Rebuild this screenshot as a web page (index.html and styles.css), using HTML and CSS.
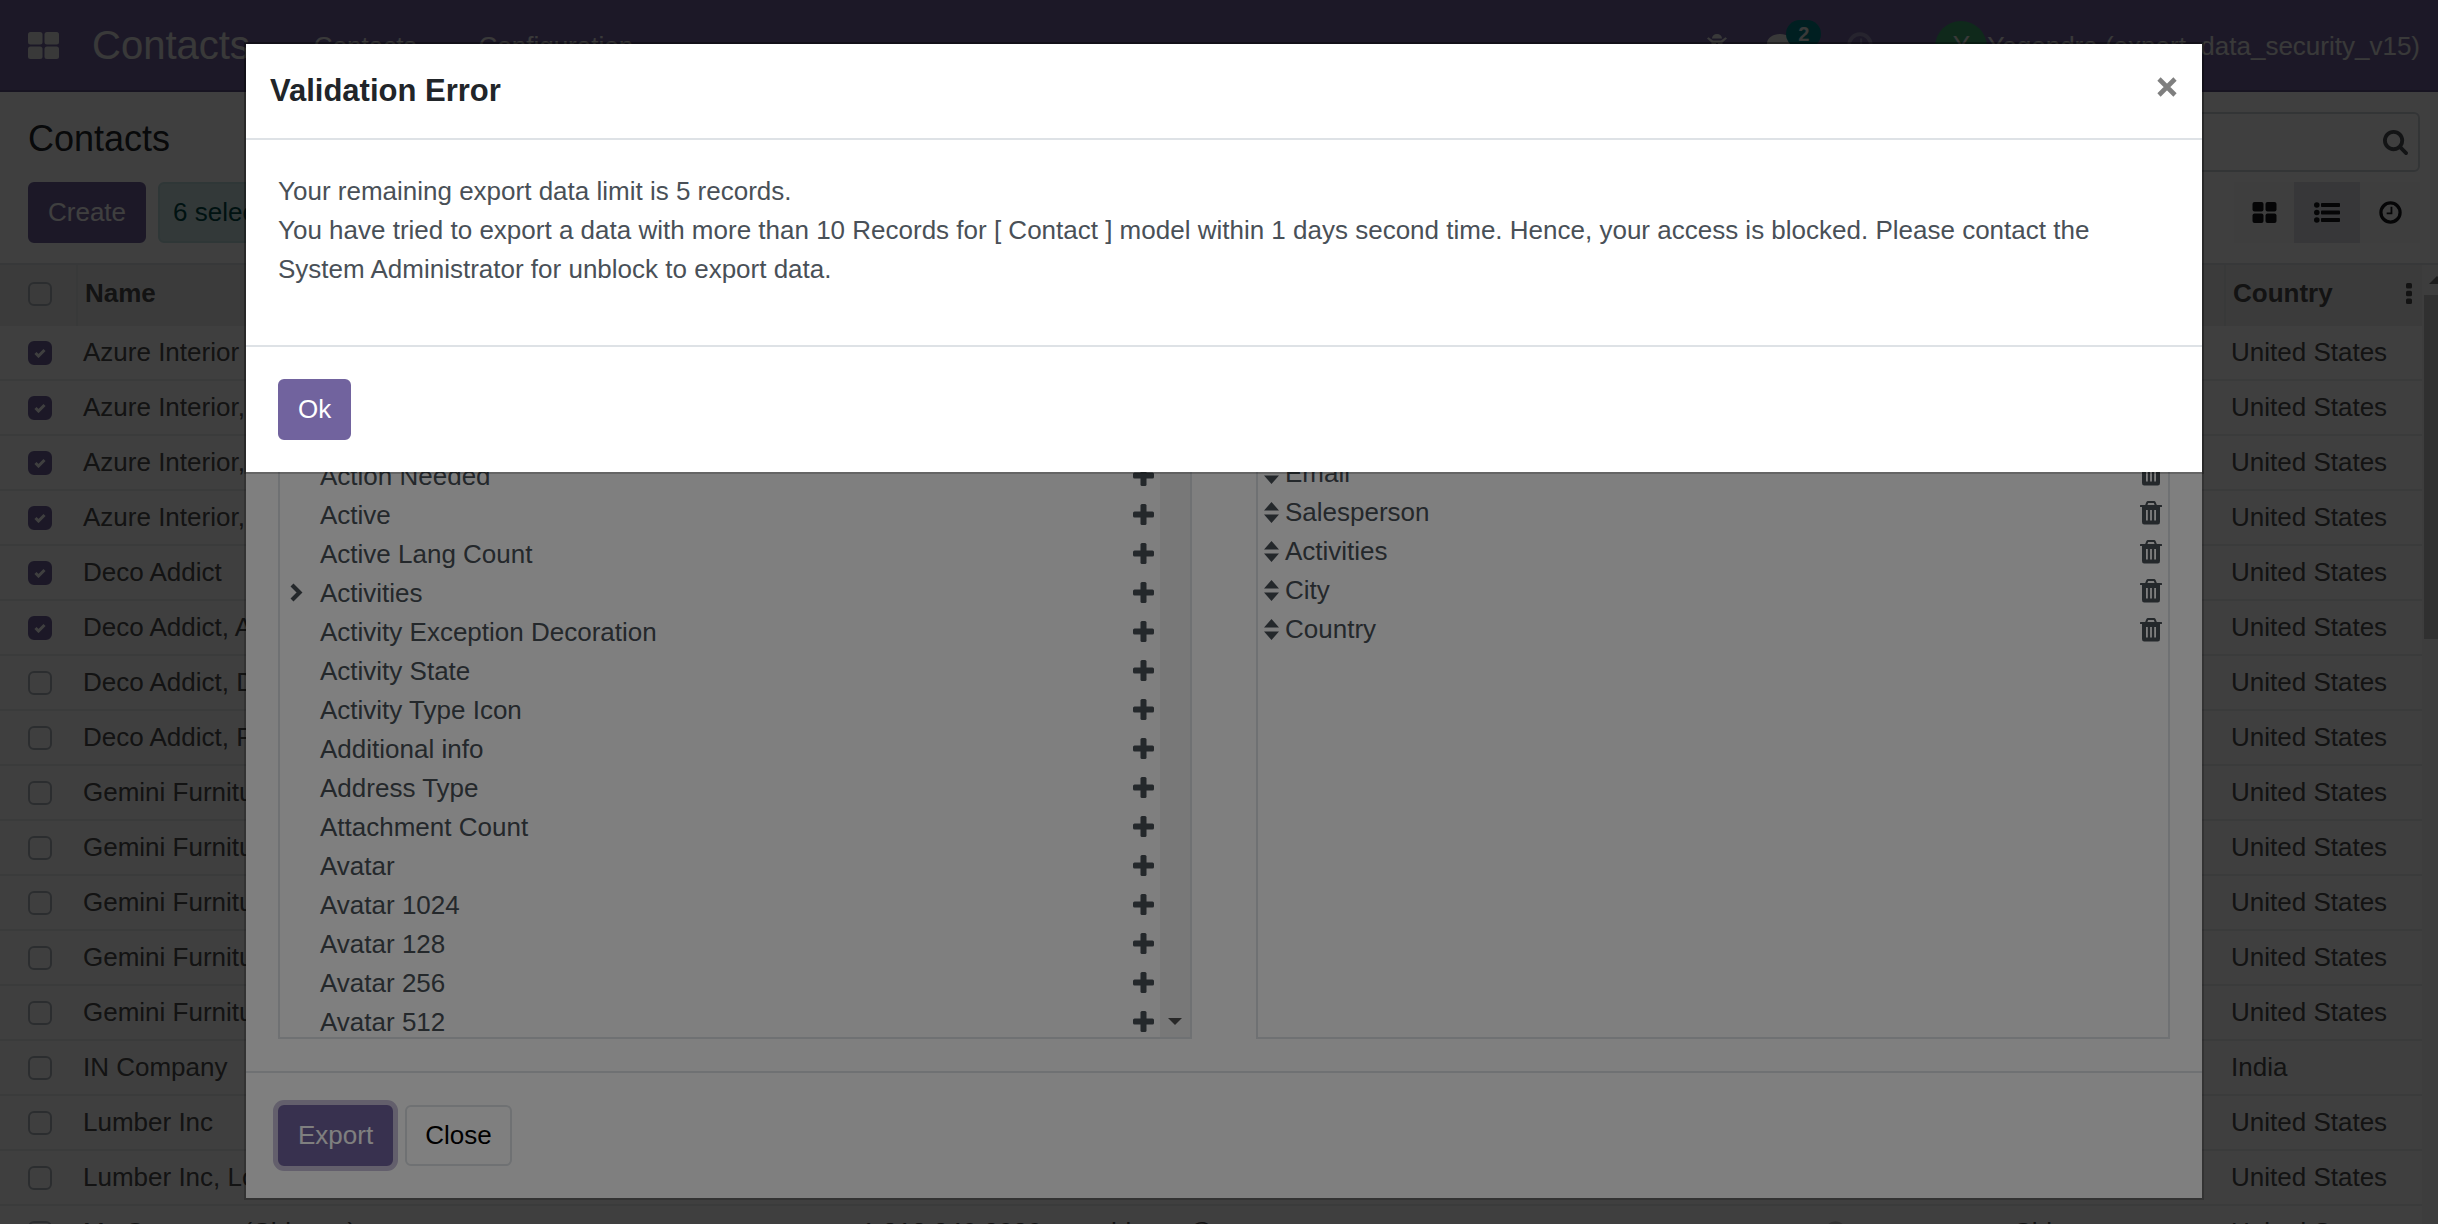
FILE: index.html
```html
<!DOCTYPE html>
<html lang="en">
<head>
<meta charset="utf-8">
<title>Contacts</title>
<link rel="stylesheet" href="styles.css">
</head>
<body>
<svg class="sprite" aria-hidden="true">
  <symbol id="i-grid" viewBox="0 0 24 21"><rect width="11" height="9.500" rx="2"/><rect x="13" width="11" height="9.500" rx="2"/><rect y="11.500" width="11" height="9.500" rx="2"/><rect x="13" y="11.500" width="11" height="9.500" rx="2"/></symbol>
  <symbol id="i-apps" viewBox="0 0 31 27"><rect width="14.500" height="12.500" rx="2.500"/><rect x="16.500" width="14.500" height="12.500" rx="2.500"/><rect y="14.500" width="14.500" height="12.500" rx="2.500"/><rect x="16.500" y="14.500" width="14.500" height="12.500" rx="2.500"/></symbol>
  <symbol id="i-list" viewBox="0 0 26 21"><circle cx="2.800" cy="3" r="2.800"/><circle cx="2.800" cy="10.500" r="2.800"/><circle cx="2.800" cy="18" r="2.800"/><rect x="7" y="1" width="19" height="4" rx=".8"/><rect x="7" y="8.500" width="19" height="4" rx=".8"/><rect x="7" y="16" width="19" height="4" rx=".8"/></symbol>
  <symbol id="i-clock" viewBox="0 0 24 24"><circle cx="12" cy="12" r="10" fill="none" stroke="currentColor" stroke-width="3.400"/><path d="M13 6v7H8" fill="none" stroke="currentColor" stroke-width="1.900"/></symbol>
  <symbol id="i-search" viewBox="0 0 1664 1664"><path d="M1152 704q0-185-131.500-316.500t-316.500-131.500-316.500 131.500-131.500 316.500 131.500 316.500 316.500 131.500 316.500-131.500 131.500-316.500zm512 832q0 52-38 90t-90 38q-54 0-90-38l-343-342q-179 124-399 124-143 0-273.500-55.500t-225-150-150-225-55.500-273.500 55.500-273.500 150-225 225-150 273.500-55.500 273.500 55.500 225 150 150 225 55.500 273.500q0 220-124 399l343 343q37 37 37 90z"/></symbol>
  <symbol id="i-trash" viewBox="0 0 22 24"><path fill-rule="evenodd" d="M8 0h6q1.200 0 1.700 1.200L16.800 4H21.500q.5 0 .5.500v1q0 .5-.5.500H20v15q0 2.500-2.200 2.500H4.200Q2 23.500 2 21V6H.5Q0 6 0 5.500v-1Q0 4 .5 4h4.700l1.100-2.800Q6.800 0 8 0zM8.200 2 7.400 4h7.200l-.8-2zM6 9v10.500h1.800V9zm4.100 0v10.500h1.800V9zm4.100 0v10.500H16V9z"/></symbol>
  <symbol id="i-plus" viewBox="0 0 21 21"><rect y="7.500" width="21" height="6" rx="1.500"/><rect x="7.500" width="6" height="21" rx="1.500"/></symbol>
  <symbol id="i-sort" viewBox="0 0 15 21"><path d="M0 8.500 7.500 0 15 8.500zM0 12.500h15L7.500 21z"/></symbol>
  <symbol id="i-chevron" viewBox="0 0 13 19"><path d="M2 2l7.500 7.500L2 17" fill="none" stroke="currentColor" stroke-width="4.200"/></symbol>
  <symbol id="i-bug" viewBox="0 0 20 22"><path d="M5 4.500a5 4.500 0 0 1 10 0zM0 4.500l1.500-1.300L6 6.500h8l4.500-3.300L20 4.500 15.500 8.500v3H20v2h-4.500l3.500 5-1.600 1.200-3.200-3.500Q13 19.500 11 20V9H9v11q-2-.5-3.200-3.300l-3.200 3.500L1 18.500l3.500-5H0v-2h4.500v-3z"/></symbol>
  <symbol id="i-chat" viewBox="0 0 26 24"><path d="M13 1c7 0 13 4 13 9.500S20 20 13 20l-3-.2Q7 23 2 23.500q3-3 3-5.200Q0 15.500 0 10.500C0 5 6 1 13 1z"/></symbol>
  <symbol id="i-dots" viewBox="0 0 6 21"><rect width="6" height="5.500" rx="1.500"/><rect y="7.700" width="6" height="5.500" rx="1.500"/><rect y="15.400" width="6" height="5.500" rx="1.500"/></symbol>
  <symbol id="i-x" viewBox="0 0 20 20"><path d="M2 2l16 16M18 2 2 18" stroke="currentColor" stroke-width="4.600"/></symbol>
</svg>

<div class="page">
  <nav class="navbar">
    <button class="plain apps" aria-label="Applications"><svg width="31" height="27"><use href="#i-apps"/></svg></button>
    <a class="brand" href="#">Contacts</a>
    <a class="menu" href="#">Contacts</a>
    <a class="menu" href="#">Configuration</a>
    <div class="systray">
      <button class="plain" aria-label="Debug"><svg width="20" height="22"><use href="#i-bug"/></svg></button>
      <button class="plain chat" aria-label="Messages"><svg width="26" height="24"><use href="#i-chat"/></svg><span class="badge">2</span></button>
      <button class="plain dim" aria-label="Activities"><svg width="26" height="26"><use href="#i-clock"/></svg></button>
      <a class="user" href="#"><span class="avatar">Y</span>Yogendra (export_data_security_v15)</a>
    </div>
  </nav>

  <header class="control">
    <h1>Contacts</h1>
    <div class="search"><input type="search" aria-label="Search"><svg width="25" height="25"><use href="#i-search"/></svg></div>
    <div class="actions">
      <button class="btn primary">Create</button>
      <span class="selection">6 selected</span>
    </div>
    <div class="views">
      <button aria-label="Kanban"><svg width="25" height="21"><use href="#i-grid"/></svg></button>
      <button class="active" aria-label="List"><svg width="26" height="21"><use href="#i-list"/></svg></button>
      <button aria-label="Activity"><svg width="23" height="23"><use href="#i-clock"/></svg></button>
    </div>
  </header>

  <div class="content">
    <table class="records">
      <colgroup><col class="c-check"><col><col class="c-phone"><col class="c-email"><col class="c-activity"><col class="c-city"><col class="c-country"></colgroup>
      <thead><tr><th><input type="checkbox" aria-label="Select all"></th><th>Name</th><th></th><th></th><th></th><th></th><th><div class="last"><span>Country</span><svg width="6" height="21"><use href="#i-dots"/></svg></div></th></tr></thead>
      <tbody>
        <tr><td><input type="checkbox" aria-label="Select" checked></td><td colspan="5">Azure Interior</td><td>United States</td></tr>
        <tr><td><input type="checkbox" aria-label="Select" checked></td><td colspan="5">Azure Interior, Brandon Freeman</td><td>United States</td></tr>
        <tr><td><input type="checkbox" aria-label="Select" checked></td><td colspan="5">Azure Interior, Colleen Diaz</td><td>United States</td></tr>
        <tr><td><input type="checkbox" aria-label="Select" checked></td><td colspan="5">Azure Interior, Nicole Ford</td><td>United States</td></tr>
        <tr><td><input type="checkbox" aria-label="Select" checked></td><td colspan="5">Deco Addict</td><td>United States</td></tr>
        <tr><td><input type="checkbox" aria-label="Select" checked></td><td colspan="5">Deco Addict, Addison Olson</td><td>United States</td></tr>
        <tr><td><input type="checkbox" aria-label="Select"></td><td colspan="5">Deco Addict, Douglas Fletcher</td><td>United States</td></tr>
        <tr><td><input type="checkbox" aria-label="Select"></td><td colspan="5">Deco Addict, Floyd Steward</td><td>United States</td></tr>
        <tr><td><input type="checkbox" aria-label="Select"></td><td colspan="5">Gemini Furniture</td><td>United States</td></tr>
        <tr><td><input type="checkbox" aria-label="Select"></td><td colspan="5">Gemini Furniture, Edwin Hansen</td><td>United States</td></tr>
        <tr><td><input type="checkbox" aria-label="Select"></td><td colspan="5">Gemini Furniture, Jesse Brown</td><td>United States</td></tr>
        <tr><td><input type="checkbox" aria-label="Select"></td><td colspan="5">Gemini Furniture, Oscar Morgan</td><td>United States</td></tr>
        <tr><td><input type="checkbox" aria-label="Select"></td><td colspan="5">Gemini Furniture, Soham Palmer</td><td>United States</td></tr>
        <tr><td><input type="checkbox" aria-label="Select"></td><td colspan="5">IN Company</td><td>India</td></tr>
        <tr><td><input type="checkbox" aria-label="Select"></td><td colspan="5">Lumber Inc</td><td>United States</td></tr>
        <tr><td><input type="checkbox" aria-label="Select"></td><td colspan="5">Lumber Inc, Lorraine Douglas</td><td>United States</td></tr>
        <tr><td><input type="checkbox" aria-label="Select"></td><td>My Company (Chicago)</td><td>+1 312 349 3030</td><td>chicago@yourcompany.com</td><td class="faint"><svg width="23" height="23"><use href="#i-clock"/></svg></td><td>Chicago</td><td>United States</td></tr>
      </tbody>
    </table>
    <div class="page-scroll" aria-hidden="true"><i class="up"></i><i class="thumb"></i></div>
  </div>
</div>

<div class="backdrop">
  <section class="modal export" role="dialog" aria-label="Export data">
    <div class="modal-body panels">
      <div class="panel">
        <ul class="fields">
          <li><span class="name">Action Needed</span><button class="plain" aria-label="Add"><svg width="21" height="21"><use href="#i-plus"/></svg></button></li>
          <li><span class="name">Active</span><button class="plain" aria-label="Add"><svg width="21" height="21"><use href="#i-plus"/></svg></button></li>
          <li><span class="name">Active Lang Count</span><button class="plain" aria-label="Add"><svg width="21" height="21"><use href="#i-plus"/></svg></button></li>
          <li><svg class="expand" width="13" height="19"><use href="#i-chevron"/></svg><span class="name">Activities</span><button class="plain" aria-label="Add"><svg width="21" height="21"><use href="#i-plus"/></svg></button></li>
          <li><span class="name">Activity Exception Decoration</span><button class="plain" aria-label="Add"><svg width="21" height="21"><use href="#i-plus"/></svg></button></li>
          <li><span class="name">Activity State</span><button class="plain" aria-label="Add"><svg width="21" height="21"><use href="#i-plus"/></svg></button></li>
          <li><span class="name">Activity Type Icon</span><button class="plain" aria-label="Add"><svg width="21" height="21"><use href="#i-plus"/></svg></button></li>
          <li><span class="name">Additional info</span><button class="plain" aria-label="Add"><svg width="21" height="21"><use href="#i-plus"/></svg></button></li>
          <li><span class="name">Address Type</span><button class="plain" aria-label="Add"><svg width="21" height="21"><use href="#i-plus"/></svg></button></li>
          <li><span class="name">Attachment Count</span><button class="plain" aria-label="Add"><svg width="21" height="21"><use href="#i-plus"/></svg></button></li>
          <li><span class="name">Avatar</span><button class="plain" aria-label="Add"><svg width="21" height="21"><use href="#i-plus"/></svg></button></li>
          <li><span class="name">Avatar 1024</span><button class="plain" aria-label="Add"><svg width="21" height="21"><use href="#i-plus"/></svg></button></li>
          <li><span class="name">Avatar 128</span><button class="plain" aria-label="Add"><svg width="21" height="21"><use href="#i-plus"/></svg></button></li>
          <li><span class="name">Avatar 256</span><button class="plain" aria-label="Add"><svg width="21" height="21"><use href="#i-plus"/></svg></button></li>
          <li><span class="name">Avatar 512</span><button class="plain" aria-label="Add"><svg width="21" height="21"><use href="#i-plus"/></svg></button></li>
        </ul>
        <div class="panel-scroll" aria-hidden="true"><i class="down"></i></div>
      </div>
      <div class="panel">
        <ul class="chosen">
          <li><svg width="15" height="21"><use href="#i-sort"/></svg><span class="name">Email</span><button class="plain" aria-label="Remove"><svg width="22" height="24"><use href="#i-trash"/></svg></button></li>
          <li><svg width="15" height="21"><use href="#i-sort"/></svg><span class="name">Salesperson</span><button class="plain" aria-label="Remove"><svg width="22" height="24"><use href="#i-trash"/></svg></button></li>
          <li><svg width="15" height="21"><use href="#i-sort"/></svg><span class="name">Activities</span><button class="plain" aria-label="Remove"><svg width="22" height="24"><use href="#i-trash"/></svg></button></li>
          <li><svg width="15" height="21"><use href="#i-sort"/></svg><span class="name">City</span><button class="plain" aria-label="Remove"><svg width="22" height="24"><use href="#i-trash"/></svg></button></li>
          <li><svg width="15" height="21"><use href="#i-sort"/></svg><span class="name">Country</span><button class="plain" aria-label="Remove"><svg width="22" height="24"><use href="#i-trash"/></svg></button></li>
        </ul>
      </div>
    </div>
    <footer class="modal-footer">
      <button class="btn primary focused">Export</button>
      <button class="btn secondary">Close</button>
    </footer>
  </section>
</div>

<div class="backdrop">
  <section class="modal" role="dialog" aria-labelledby="error-title">
    <header class="modal-header">
      <h2 id="error-title">Validation Error</h2>
      <button class="plain close" aria-label="Close"><svg width="20" height="20"><use href="#i-x"/></svg></button>
    </header>
    <div class="modal-body message">
      <p>Your remaining export data limit is 5 records.<br>You have tried to export a data with more than 10 Records for [ Contact ] model within 1 days second time. Hence, your access is blocked. Please contact the System Administrator for unblock to export data.</p>
    </div>
    <footer class="modal-footer"><button class="btn primary">Ok</button></footer>
  </section>
</div>
</body>
</html>
```
FILE: styles.css
```css
* { box-sizing: border-box; }

body {
  margin: 0;
  height: 100vh;
  overflow: hidden;
  background: #fff;
  color: #4c4c4c;
  font: 26px/39px "Liberation Sans", Arial, sans-serif;
}

h1, h2, p, ul { margin: 0; padding: 0; font-weight: normal; }
ul { list-style: none; }
a { color: inherit; text-decoration: none; }
svg { display: block; flex: none; fill: currentColor; }
button, input { font: inherit; color: inherit; margin: 0; }
.sprite { position: absolute; width: 0; height: 0; }

.plain { padding: 0; border: 0; background: none; display: flex; }

.btn {
  padding: 9px 18px;
  border: 2px solid #dee2e6;
  border-radius: 6px;
  background: #fff;
  color: #212529;
}
.btn.primary { border-color: #71639e; background: #71639e; color: #fff; }
.btn.secondary { color: #000; }
.btn.focused { box-shadow: 0 0 0 5px #c6bfd8; }

/* Top bar */
.page { height: 100%; display: flex; flex-direction: column; overflow: hidden; }
.navbar {
  flex: none;
  height: 92px;
  padding: 0 18px 0 28px;
  display: flex;
  align-items: center;
  background: #71639e;
  border-bottom: 2px solid #5f5387;
  color: #e6e6e6;
}
.brand { margin: 0 38px 0 33px; font-size: 40px; }
.menu { padding: 3px 26px 0; margin-right: 10px; }
.systray { margin-left: auto; display: flex; align-items: center; }
.systray .plain { margin-right: 40px; }
.systray .chat { position: relative; margin-right: 54px; }
.systray .dim { margin-right: 62px; color: #9a90bb; }
.badge {
  position: absolute;
  left: 19px;
  top: -13px;
  width: 35px;
  border-radius: 14px;
  background: #017e84;
  font: bold 20px/28px "Liberation Sans", Arial, sans-serif;
}
.user { display: flex; align-items: center; padding-top: 3px; }
.avatar {
  width: 52px;
  height: 52px;
  border-radius: 50%;
  background: #3ca56e;
  text-align: center;
  line-height: 48px;
}

/* Control panel */
.control {
  flex: none;
  display: grid;
  grid-template-columns: 1fr 1fr;
  row-gap: 10px;
  padding: 20px 18px 20px 28px;
  border-bottom: 2px solid #dee2e6;
}
.control h1 { font-size: 36px; line-height: 54px; color: #212529; }
.search {
  display: flex;
  align-items: center;
  height: 60px;
  padding-right: 10px;
  border: 2px solid #ced4da;
  border-radius: 6px;
  color: #4c5157;
}
.search input { flex: 1; border: 0; background: none; outline: 0; }
.actions { display: flex; gap: 12px; }
.selection {
  padding: 9px 13px;
  border: 2px solid #bcdcdd;
  border-radius: 6px;
  background: #cce5e6;
  color: #014a46;
}
.views { display: flex; justify-content: flex-end; }
.views button {
  width: 60px;
  display: grid;
  place-items: center;
  padding: 0;
  border: 0;
  background: #fafafb;
  color: #14171a;
}
.views .active { width: 66px; background: #dcdfe6; }

/* Record list */
.content { flex: 1; min-height: 0; display: flex; align-items: flex-start; overflow: hidden; }
.records { flex: 1; min-width: 0; table-layout: fixed; border-collapse: separate; border-spacing: 0; }
.c-check { width: 76px; }
.c-phone { width: 252px; }
.c-email { width: 726px; }
.c-activity { width: 189px; }
.c-city { width: 218px; }
.c-country { width: 198px; }
.records th, .records td { height: 55px; padding: 0 7px; text-align: left; }
.records th { height: 61px; padding-bottom: 4px; background: #efefef; }
.records th:nth-child(2), .records th:last-child { border-left: 2px solid #e2e4e6; }
.records td { border-bottom: 2px solid #e9ecef; }
.records th:first-child, .records td:first-child { padding-left: 28px; }
.last { display: flex; justify-content: space-between; align-items: center; padding-right: 3px; }
.faint { color: #c8c8c8; }
.records input {
  appearance: none;
  display: block;
  width: 24px;
  height: 24px;
  border: 2px solid #adb5bd;
  border-radius: 6px;
}
.records input:checked {
  border-color: #71639e;
  background: #71639e url("data:image/svg+xml,%3Csvg xmlns='http://www.w3.org/2000/svg' viewBox='0 0 12 10'%3E%3Cpath d='M1.500 5l3 3 6-6' fill='none' stroke='%23fff' stroke-width='3'/%3E%3C/svg%3E") center / 12px 10px no-repeat;
}
.page-scroll {
  flex: none;
  align-self: stretch;
  width: 30px;
  margin-right: -14px;
  padding: 6px 2px;
  display: flex;
  flex-direction: column;
  align-items: center;
  gap: 11px;
  background: #f6f6f6;
}
.up { border: 8px solid transparent; border-top: 0; border-bottom: 8px solid #777; margin-top: 5px; }
.thumb { width: 26px; height: 344px; background: #c1c1c1; }

/* Dialogs */
.backdrop {
  position: fixed;
  inset: 0;
  padding: 42px 234px 0 244px;
  background: rgba(0, 0, 0, .5);
}
.modal { border: 2px solid rgba(0, 0, 0, .2); background: #fff; background-clip: padding-box; }
.modal-header {
  display: flex;
  align-items: flex-start;
  justify-content: space-between;
  padding: 23px 25px 23px 24px;
  border-bottom: 2px solid #dee2e6;
  color: #212529;
}
.modal-header h2 { font-size: 31px; line-height: 48px; font-weight: bold; }
.close { padding-top: 10px; color: #7f7f7f; }
.modal-body { padding: 32px; color: #495057; }
.message p { padding-bottom: 24px; }
.modal-footer { display: flex; gap: 12px; padding: 32px; border-top: 2px solid #dee2e6; }

/* Export field picker */
.panels { display: grid; grid-template-columns: 1fr 1fr; gap: 64px; padding-top: 408px; }
.panel { display: flex; height: 587px; border: 2px solid #dee2e6; border-top: 0; overflow: hidden; }
.panel ul { flex: 1; }
.panel li { display: flex; align-items: center; height: 39px; }
.panel .name { flex: 1; }
.fields { padding-top: 5px; }
.fields li { padding: 0 6px 0 40px; }
.fields li .plain { padding-bottom: 2px; }
.fields .expand { margin: 0 17px 3px -30px; }
.chosen { padding-top: 2px; }
.chosen li { gap: 6px; padding: 0 6px; }
.panel-scroll { width: 30px; background: #f1f1f1; display: flex; flex-direction: column; justify-content: flex-end; align-items: center; padding-bottom: 12px; }
.down { border: 7px solid transparent; border-top: 7px solid #505050; border-bottom: 0; }
```
